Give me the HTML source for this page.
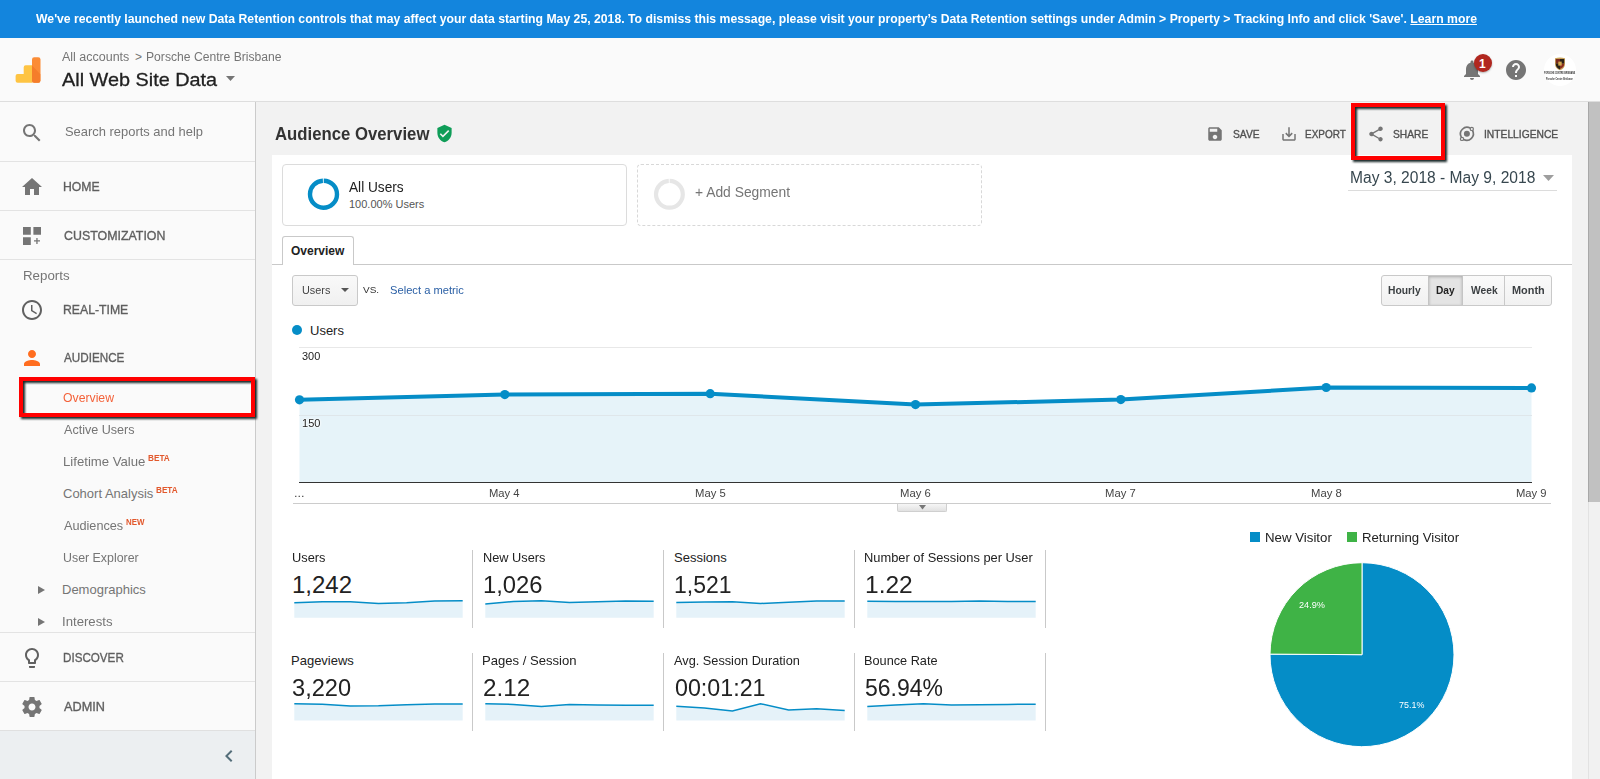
<!DOCTYPE html>
<html lang="en">
<head>
<meta charset="utf-8">
<title>Analytics - Audience Overview</title>
<style>
*{box-sizing:border-box;margin:0;padding:0}
html,body{width:1600px;height:779px;overflow:hidden;background:#f2f2f2;font-family:"Liberation Sans",Arial,sans-serif;color:#222}
.t{position:absolute;white-space:nowrap;transform-origin:0 0}
.a{position:absolute}
svg{position:absolute;overflow:visible}
#banner{position:absolute;left:0;top:0;width:1600px;height:38px;background:#1385dd}
#header{position:absolute;left:0;top:38px;width:1600px;height:64px;background:#fafafa;border-bottom:1px solid #dedede}
#sidebar{position:absolute;left:0;top:102px;width:256px;height:677px;background:#fafafa;border-right:1px solid #cbcbcb}
.sep{position:absolute;left:0;width:255px;height:1px;background:#e3e3e3}
#panel{position:absolute;left:272px;top:155px;width:1300px;height:624px;background:#fff}
.redbox{position:absolute;border:4px solid #ff0000;filter:drop-shadow(2px 2px 1.3px rgba(12,28,28,.95))}
.vsep{position:absolute;width:1px;height:78px;background:#c9c9c9}
</style>
</head>
<body>
<div id="banner"></div>
<div class="t" style="left:36px;top:11px;font-size:13px;line-height:15px;font-weight:bold;transform:scaleX(0.9409);color:#fff;">We've recently launched new Data Retention controls that may affect your data starting May 25, 2018. To dismiss this message, please visit your property’s Data Retention settings under Admin &gt; Property &gt; Tracking Info and click 'Save'. <u>Learn more</u></div>
<div id="header"></div>
<svg style="left:14px;top:56px" width="28" height="28" viewBox="0 0 28 28">
<defs><clipPath id="gab"><rect x="18" y="1.2" width="8.5" height="25.6" rx="2.2"/></clipPath></defs>
<path d="M3.6 17.9h6.1v-6.6a2 2 0 0 1 2-2h6.8v17.5H3.6a2 2 0 0 1 -2-2v-4.9a2 2 0 0 1 2-2z" fill="#fec443"/>
<g clip-path="url(#gab)"><rect x="18" y="1" width="9" height="26" fill="#fb8c36"/><path d="M18 9.6L26.6 18.4V27H18z" fill="#f57d2a"/></g>
</svg>
<div class="t" style="left:62px;top:50px;font-size:12px;line-height:14px;transform:scaleX(1.0407);color:#757575;">All accounts</div>
<div class="t" style="left:135px;top:50px;font-size:12px;line-height:14px;color:#757575;">&gt;</div>
<div class="t" style="left:146px;top:50px;font-size:12px;line-height:14px;transform:scaleX(1.0113);color:#757575;">Porsche Centre Brisbane</div>
<div class="t" style="left:62px;top:69px;font-size:19px;line-height:21px;transform:scaleX(1.0441);color:#212121;-webkit-text-stroke:0.3px;">All Web Site Data</div>
<svg style="left:226px;top:76px" width="9" height="5" viewBox="0 0 9 5"><path d="M0 0h9L4.5 5z" fill="#757575"/></svg>
<svg style="left:1459.8px;top:58px" width="24" height="24" viewBox="0 0 24 24"><path fill="#757575" d="M12 22c1.1 0 2-.9 2-2h-4c0 1.1.89 2 2 2zm6-6v-5c0-3.07-1.64-5.64-4.5-6.32V4c0-.83-.67-1.5-1.5-1.5s-1.5.67-1.5 1.5v.68C7.63 5.36 6 7.92 6 11v5l-2 2v1h16v-1l-2-2z"/></svg>
<div class="a" style="left:1474px;top:54px;width:18px;height:18px;border-radius:9px;background:#b1271f;box-shadow:0 1px 2px rgba(0,0,0,.3)"></div>
<div class="t" style="left:1479px;top:57px;font-size:12px;line-height:14px;font-weight:bold;color:#fff;">1</div>
<svg style="left:1504px;top:58px" width="24" height="24" viewBox="0 0 24 24"><path fill="#757575" d="M12 2C6.48 2 2 6.48 2 12s4.48 10 10 10 10-4.48 10-10S17.52 2 12 2zm1 17h-2v-2h2v2zm2.07-7.75l-.9.92C13.45 12.9 13 13.5 13 15h-2v-.5c0-1.1.45-2.1 1.17-2.83l1.24-1.26c.37-.36.59-.86.59-1.41 0-1.1-.9-2-2-2s-2 .9-2 2H8c0-2.21 1.79-4 4-4s4 1.79 4 4c0 .88-.36 1.68-.93 2.25z"/></svg>
<div class="a" style="left:1544px;top:54px;width:32px;height:32px;border-radius:16px;background:#fff"></div>
<svg style="left:1554px;top:57px" width="12" height="14" viewBox="0 0 12 14"><path d="M1 1.2Q6 0 11 1.2V7Q11 11.5 6 13.2Q1 11.5 1 7z" fill="#c9a35a"/><path d="M1.8 2h4.2v4.6H1.8z" fill="#7b2a1e"/><path d="M6 6.6h4.2V7q0 3.4-4.2 5z" fill="#8b2d1f"/><path d="M6 2h4.2v4.6H6zM1.8 6.6H6v5.9Q1.8 10.6 1.8 7z" fill="#2b2118"/><rect x="4.3" y="4.6" width="3.4" height="4" fill="#d4aa4e"/></svg>
<div class="t" style="left:1544px;top:72px;font-size:2.7px;line-height:3px;font-weight:bold;transform:scaleX(0.7830);color:#333;">PORSCHE CENTRE BRISBANE</div>
<div class="t" style="left:1546px;top:77px;font-size:3px;line-height:4px;font-weight:bold;transform:scaleX(0.7469);color:#333;">Porsche Centre Brisbane</div>
<div id="sidebar"></div>
<div class="sep" style="top:161px"></div>
<div class="sep" style="top:210px"></div>
<div class="sep" style="top:259px"></div>
<div class="sep" style="top:632px"></div>
<div class="sep" style="top:681px"></div>
<div class="a" style="left:0;top:730px;width:255px;height:49px;background:#eceff1;border-top:1px solid #e0e0e0"></div>
<svg style="left:20px;top:121px" width="24" height="24" viewBox="0 0 24 24"><path fill="#757575" d="M15.5 14h-.79l-.28-.27C15.41 12.59 16 11.11 16 9.5 16 5.91 13.09 3 9.5 3S3 5.91 3 9.5 5.91 16 9.5 16c1.61 0 3.09-.59 4.23-1.57l.27.28v.79l5 4.99L20.49 19l-4.99-5zm-6 0C7.01 14 5 11.99 5 9.5S7.01 5 9.5 5 14 7.01 14 9.5 11.99 14 9.5 14z"/></svg>
<div class="t" style="left:65px;top:124px;font-size:13px;line-height:15px;transform:scaleX(0.9942);color:#757575;">Search reports and help</div>
<svg style="left:20px;top:175px" width="24" height="24" viewBox="0 0 24 24"><path fill="#757575" d="M10 20v-6h4v6h5v-8h3L12 3 2 12h3v8z"/></svg>
<div class="t" style="left:63px;top:179px;font-size:13px;line-height:15px;-webkit-text-stroke:0.35px;transform:scaleX(0.9403);color:#5f5f5f;">HOME</div>
<svg style="left:20px;top:224px" width="24" height="24" viewBox="0 0 24 24"><path fill="#757575" d="M3 3h7.8v7.8H3zM13.4 3h7.6v7.8h-7.6zM3 13.3h7.8V21H3zM17.6 14h-1.3v2.3H14v1.3h2.3V20h1.3v-2.4H20v-1.3h-2.4z"/></svg>
<div class="t" style="left:64px;top:228px;font-size:13px;line-height:15px;-webkit-text-stroke:0.35px;transform:scaleX(0.9534);color:#5f5f5f;">CUSTOMIZATION</div>
<div class="t" style="left:23px;top:268px;font-size:13px;line-height:15px;transform:scaleX(1.0226);color:#757575;">Reports</div>
<svg style="left:20px;top:298px" width="24" height="24" viewBox="0 0 24 24"><path fill="#616161" d="M11.99 2C6.47 2 2 6.48 2 12s4.47 10 9.99 10C17.52 22 22 17.52 22 12S17.52 2 11.99 2zM12 20c-4.42 0-8-3.58-8-8s3.58-8 8-8 8 3.58 8 8-3.58 8-8 8zm.5-13H11v6l5.25 3.15.75-1.23-4.5-2.67z"/></svg>
<div class="t" style="left:63px;top:302px;font-size:13px;line-height:15px;-webkit-text-stroke:0.35px;transform:scaleX(0.9415);color:#5f5f5f;">REAL-TIME</div>
<svg style="left:20px;top:346px" width="24" height="24" viewBox="0 0 24 24"><path fill="#ff6d1f" d="M12 12c2.21 0 4-1.79 4-4s-1.79-4-4-4-4 1.79-4 4 1.79 4 4 4zm0 2c-2.67 0-8 1.34-8 4v2h16v-2c0-2.66-5.33-4-8-4z"/></svg>
<div class="t" style="left:64px;top:350px;font-size:13px;line-height:15px;-webkit-text-stroke:0.35px;transform:scaleX(0.8986);color:#5f5f5f;">AUDIENCE</div>
<div class="t" style="left:63px;top:390px;font-size:13px;line-height:15px;transform:scaleX(0.9413);color:#f4623a;">Overview</div>
<div class="t" style="left:64px;top:422px;font-size:13px;line-height:15px;transform:scaleX(0.9673);color:#757575;">Active Users</div>
<div class="t" style="left:63px;top:454px;font-size:13px;line-height:15px;transform:scaleX(1.0126);color:#757575;">Lifetime Value</div>
<div class="t" style="left:148px;top:453px;font-size:9px;line-height:10px;font-weight:bold;transform:scaleX(0.9119);color:#e2582c;">BETA</div>
<div class="t" style="left:63px;top:486px;font-size:13px;line-height:15px;color:#757575;">Cohort Analysis</div>
<div class="t" style="left:156px;top:485px;font-size:9px;line-height:10px;font-weight:bold;transform:scaleX(0.9083);color:#e2582c;">BETA</div>
<div class="t" style="left:64px;top:518px;font-size:13px;line-height:15px;transform:scaleX(0.9752);color:#757575;">Audiences</div>
<div class="t" style="left:126px;top:517px;font-size:9px;line-height:10px;font-weight:bold;transform:scaleX(0.8785);color:#e2582c;">NEW</div>
<div class="t" style="left:63px;top:550px;font-size:13px;line-height:15px;transform:scaleX(0.9532);color:#757575;">User Explorer</div>
<svg style="left:38px;top:586px" width="7" height="8" viewBox="0 0 7 8"><path d="M0 0L7 4L0 8z" fill="#757575"/></svg>
<div class="t" style="left:62px;top:582px;font-size:13px;line-height:15px;color:#757575;">Demographics</div>
<svg style="left:38px;top:618px" width="7" height="8" viewBox="0 0 7 8"><path d="M0 0L7 4L0 8z" fill="#757575"/></svg>
<div class="t" style="left:62px;top:614px;font-size:13px;line-height:15px;transform:scaleX(1.0134);color:#757575;">Interests</div>
<svg style="left:20px;top:646px" width="24" height="24" viewBox="0 0 24 24"><path fill="#616161" d="M9 21c0 .55.45 1 1 1h4c.55 0 1-.45 1-1v-1H9v1zm3-19C8.14 2 5 5.14 5 9c0 2.38 1.19 4.47 3 5.74V17c0 .55.45 1 1 1h6c.55 0 1-.45 1-1v-2.26c1.81-1.27 3-3.36 3-5.74 0-3.86-3.14-7-7-7zm2.85 11.1l-.85.6V16h-4v-2.3l-.85-.6C7.8 12.16 7 10.63 7 9c0-2.76 2.24-5 5-5s5 2.24 5 5c0 1.63-.8 3.16-2.15 4.1z"/></svg>
<div class="t" style="left:63px;top:650px;font-size:13px;line-height:15px;-webkit-text-stroke:0.35px;transform:scaleX(0.8953);color:#5f5f5f;">DISCOVER</div>
<svg style="left:20px;top:695px" width="24" height="24" viewBox="0 0 24 24"><path fill="#757575" d="M19.43 12.98c.04-.32.07-.64.07-.98s-.03-.66-.07-.98l2.11-1.65c.19-.15.24-.42.12-.64l-2-3.46c-.12-.22-.39-.3-.61-.22l-2.49 1c-.52-.4-1.08-.73-1.69-.98l-.38-2.65C14.46 2.18 14.25 2 14 2h-4c-.25 0-.46.18-.49.42l-.38 2.65c-.61.25-1.17.59-1.69.98l-2.49-1c-.23-.09-.49 0-.61.22l-2 3.46c-.13.22-.07.49.12.64l2.11 1.65c-.04.32-.07.65-.07.98s.03.66.07.98l-2.11 1.65c-.19.15-.24.42-.12.64l2 3.46c.12.22.39.3.61.22l2.49-1c.52.4 1.08.73 1.69.98l.38 2.65c.03.24.24.42.49.42h4c.25 0 .46-.18.49-.42l.38-2.65c.61-.25 1.17-.59 1.69-.98l2.49 1c.23.09.49 0 .61-.22l2-3.46c.12-.22.07-.49-.12-.64l-2.11-1.65zM12 15.5c-1.93 0-3.5-1.57-3.5-3.5s1.57-3.5 3.5-3.5 3.5 1.57 3.5 3.5-1.57 3.5-3.5 3.5z"/></svg>
<div class="t" style="left:64px;top:699px;font-size:13px;line-height:15px;-webkit-text-stroke:0.35px;transform:scaleX(0.9770);color:#5f5f5f;">ADMIN</div>
<svg style="left:217px;top:744px" width="24" height="24" viewBox="0 0 24 24"><path fill="#546e7a" d="M15.41 7.41L14 6l-6 6 6 6 1.41-1.41L10.83 12z"/></svg>
<div class="redbox" style="left:19px;top:377px;width:236px;height:40px"></div>
<div id="panel"></div>
<div class="t" style="left:275px;top:124px;font-size:18px;line-height:20px;font-weight:bold;transform:scaleX(0.9297);color:#333;">Audience Overview</div>
<svg style="left:434.6px;top:124.2px" width="19" height="19" viewBox="0 0 24 24"><path fill="#0f9d58" d="M12 1L3 5v6c0 5.55 3.84 10.74 9 12 5.16-1.26 9-6.45 9-12V5l-9-4zm-2 16l-4-4 1.41-1.41L10 14.17l6.59-6.59L18 9l-8 8z"/></svg>
<svg style="left:1205.7px;top:125px" width="18" height="18" viewBox="0 0 24 24"><path fill="#757575" d="M17 3H5c-1.11 0-2 .9-2 2v14c0 1.1.89 2 2 2h14c1.1 0 2-.9 2-2V7l-4-4zm-5 16c-1.66 0-3-1.34-3-3s1.34-3 3-3 3 1.34 3 3-1.34 3-3 3zm3-10H5V5h10v4z"/></svg>
<div class="t" style="left:1233px;top:128px;font-size:11px;line-height:12px;-webkit-text-stroke:0.35px;transform:scaleX(0.9334);color:#505050;">SAVE</div>
<svg style="left:1279.9px;top:125px" width="18" height="18" viewBox="0 0 24 24"><path fill="#757575" d="M19 12v7H5v-7H3v7c0 1.1.9 2 2 2h14c1.1 0 2-.9 2-2v-7h-2zm-6 .67l2.59-2.58L17 11.5l-5 5-5-5 1.41-1.41L11 12.67V3h2z"/></svg>
<div class="t" style="left:1305px;top:128px;font-size:11px;line-height:12px;-webkit-text-stroke:0.35px;transform:scaleX(0.9060);color:#505050;">EXPORT</div>
<svg style="left:1366.6px;top:125px" width="18" height="18" viewBox="0 0 24 24"><path fill="#757575" d="M18 16.08c-.76 0-1.44.3-1.96.77L8.91 12.7c.05-.23.09-.46.09-.7s-.04-.47-.09-.7l7.05-4.11c.54.5 1.25.81 2.04.81 1.66 0 3-1.34 3-3s-1.34-3-3-3-3 1.34-3 3c0 .24.04.47.09.7L8.04 9.81C7.5 9.31 6.79 9 6 9c-1.66 0-3 1.34-3 3s1.34 3 3 3c.79 0 1.5-.31 2.04-.81l7.12 4.16c-.05.21-.08.43-.08.65 0 1.61 1.31 2.92 2.92 2.92 1.61 0 2.92-1.31 2.92-2.92s-1.31-2.92-2.92-2.92z"/></svg>
<div class="t" style="left:1393px;top:128px;font-size:11px;line-height:12px;-webkit-text-stroke:0.35px;transform:scaleX(0.9302);color:#505050;">SHARE</div>
<svg style="left:1458px;top:125px" width="18" height="18" viewBox="0 0 18 18" fill="none" stroke="#757575" stroke-width="1.7"><circle cx="8.9" cy="8.8" r="3" fill="#757575" stroke="none"/><path d="M3.3 12.1A6.6 6.6 0 0 1 12.2 3.1"/><path d="M14.5 5.5A6.6 6.6 0 0 1 5.6 14.5"/><circle cx="13.8" cy="3.9" r="1.6" stroke-width="1.2"/><circle cx="4" cy="13.9" r="1.6" stroke-width="1.2"/></svg>
<div class="t" style="left:1484px;top:128px;font-size:11px;line-height:12px;-webkit-text-stroke:0.35px;transform:scaleX(0.9340);color:#505050;">INTELLIGENCE</div>
<div class="redbox" style="left:1351px;top:103px;width:94px;height:57px"></div>
<div class="t" style="left:1350px;top:169px;font-size:16px;line-height:17px;transform:scaleX(0.9738);color:#37474f;">May 3, 2018 - May 9, 2018</div>
<svg style="left:1543px;top:175px" width="11" height="6" viewBox="0 0 11 6"><path d="M0 0h11L5.5 6z" fill="#9e9e9e"/></svg>
<div class="a" style="left:1348px;top:190px;width:209px;height:1px;background:#dcdcdc"></div>
<div class="a" style="left:282px;top:164px;width:345px;height:62px;border:1px solid #dcdcdc;border-radius:4px;background:#fff"></div>
<svg style="left:307px;top:178px" width="33" height="33" viewBox="0 0 33 33"><circle cx="16.5" cy="16.2" r="13.5" fill="none" stroke="#058dc7" stroke-width="4.4" stroke-dasharray="83.4 1.4" transform="rotate(-89 16.5 16.2)"/></svg>
<div class="t" style="left:349px;top:179px;font-size:14px;line-height:16px;transform:scaleX(0.9765);color:#222;">All Users</div>
<div class="t" style="left:349px;top:198px;font-size:11px;line-height:12px;color:#555;">100.00% Users</div>
<div class="a" style="left:637px;top:164px;width:345px;height:62px;border:1px dashed #d8d8d8;border-radius:4px;background:#fff"></div>
<svg style="left:653px;top:178px" width="33" height="33" viewBox="0 0 33 33"><circle cx="16.4" cy="16.3" r="13.4" fill="none" stroke="#e6e6e6" stroke-width="4.2" stroke-dasharray="82.8 1.4" transform="rotate(-89 16.4 16.3)"/></svg>
<div class="t" style="left:695px;top:183px;font-size:15px;line-height:17px;transform:scaleX(0.9233);color:#757575;">+ Add Segment</div>
<div class="a" style="left:272px;top:264px;width:1300px;height:1px;background:#c9c9c9"></div>
<div class="a" style="left:282px;top:236px;width:72px;height:29px;border:1px solid #c9c9c9;border-bottom:none;border-radius:3px 3px 0 0;background:#fff"></div>
<div class="t" style="left:291px;top:244px;font-size:12px;line-height:14px;font-weight:bold;color:#222;">Overview</div>
<div class="a" style="left:292px;top:275px;width:66px;height:31px;border:1px solid #c9c9c9;border-radius:3px;background:linear-gradient(#f9f9f9,#f0f0f0)"></div>
<div class="t" style="left:302px;top:284px;font-size:11px;line-height:12px;transform:scaleX(0.9878);color:#444;">Users</div>
<svg style="left:341px;top:288px" width="8" height="4" viewBox="0 0 8 4"><path d="M0 0h8L4 4z" fill="#555"/></svg>
<div class="t" style="left:363px;top:284px;font-size:9.5px;line-height:11px;transform:scaleX(1.0482);color:#333;">VS.</div>
<div class="t" style="left:390px;top:284px;font-size:11px;line-height:12px;transform:scaleX(1.0156);color:#2a5fa5;">Select a metric</div>
<div class="a" style="left:1381px;top:275px;width:171px;height:31px;border:1px solid #c9c9c9;border-radius:3px;background:linear-gradient(#fafafa,#f1f1f1)"></div>
<div class="a" style="left:1428px;top:276px;width:35px;height:29px;background:#e4e4e4;box-shadow:inset 0 1px 3px rgba(0,0,0,.25);border-left:1px solid #c4c4c4;border-right:1px solid #c4c4c4"></div>
<div class="a" style="left:1504px;top:276px;width:1px;height:29px;background:#c9c9c9"></div>
<div class="t" style="left:1388px;top:284px;font-size:11px;line-height:12px;font-weight:bold;transform:scaleX(0.9366);color:#3c4043;">Hourly</div>
<div class="t" style="left:1436px;top:284px;font-size:11px;line-height:12px;font-weight:bold;transform:scaleX(0.9231);color:#222;">Day</div>
<div class="t" style="left:1471px;top:284px;font-size:11px;line-height:12px;font-weight:bold;transform:scaleX(0.9318);color:#3c4043;">Week</div>
<div class="t" style="left:1512px;top:284px;font-size:11px;line-height:12px;font-weight:bold;transform:scaleX(0.9911);color:#3c4043;">Month</div>
<svg style="left:292px;top:325px" width="10" height="10"><circle cx="5" cy="5" r="5" fill="#058dc7"/></svg>
<div class="t" style="left:310px;top:323px;font-size:13px;line-height:15px;color:#222;">Users</div>
<svg style="left:0;top:0" width="1600" height="779" viewBox="0 0 1600 779">
<rect x="299" y="347" width="1233" height="1" fill="#e8e8e8"/>
<polygon points="299.5,482 299.5,399.8 504.8,394.6 710.2,393.7 915.5,404.6 1120.8,399.6 1326.2,387.5 1531.5,387.9 1531.5,482" fill="#e6f3f9"/>
<rect x="299" y="415" width="1233" height="1" fill="#dfe6ea"/>
<rect x="299" y="482" width="1233" height="1" fill="#333"/>
<polyline points="299.5,399.8 504.8,394.6 710.2,393.7 915.5,404.6 1120.8,399.6 1326.2,387.5 1531.5,387.9" fill="none" stroke="#058dc7" stroke-width="4" stroke-linejoin="round"/>
<circle cx="299.5" cy="399.8" r="4.6" fill="#058dc7"/>
<circle cx="504.8" cy="394.6" r="4.6" fill="#058dc7"/>
<circle cx="710.2" cy="393.7" r="4.6" fill="#058dc7"/>
<circle cx="915.5" cy="404.6" r="4.6" fill="#058dc7"/>
<circle cx="1120.8" cy="399.6" r="4.6" fill="#058dc7"/>
<circle cx="1326.2" cy="387.5" r="4.6" fill="#058dc7"/>
<circle cx="1531.5" cy="387.9" r="4.6" fill="#058dc7"/>
</svg>
<div class="t" style="left:302px;top:351px;font-size:10px;line-height:11px;transform:scaleX(1.0943);color:#222;">300</div>
<div class="t" style="left:302px;top:418px;font-size:10px;line-height:11px;transform:scaleX(1.1017);color:#222;text-shadow:0 0 2px #fff,0 0 2px #fff,0 0 2px #fff;">150</div>
<div class="t" style="left:294px;top:487px;font-size:11px;line-height:12px;transform:scaleX(1.1515);color:#444;">...</div>
<div class="t" style="left:489px;top:487px;font-size:11px;line-height:12px;transform:scaleX(1.0196);color:#444;">May 4</div>
<div class="t" style="left:695px;top:487px;font-size:11px;line-height:12px;transform:scaleX(1.0255);color:#444;">May 5</div>
<div class="t" style="left:900px;top:487px;font-size:11px;line-height:12px;transform:scaleX(1.0261);color:#444;">May 6</div>
<div class="t" style="left:1105px;top:487px;font-size:11px;line-height:12px;transform:scaleX(1.0244);color:#444;">May 7</div>
<div class="t" style="left:1311px;top:487px;font-size:11px;line-height:12px;transform:scaleX(1.0262);color:#444;">May 8</div>
<div class="t" style="left:1516px;top:487px;font-size:11px;line-height:12px;transform:scaleX(1.0218);color:#444;">May 9</div>
<div class="a" style="left:293px;top:503px;width:1258px;height:1px;background:#ccc"></div>
<div class="a" style="left:897px;top:504px;width:50px;height:8px;background:linear-gradient(#f6f6f6,#e1e1e1);border:1px solid #cfcfcf;border-top:none;border-radius:0 0 2px 2px"></div>
<svg style="left:919px;top:505px" width="7" height="5" viewBox="0 0 7 5"><path d="M0 0h7L3.5 4.6z" fill="#777"/></svg>
<div class="t" style="left:292px;top:550px;font-size:13px;line-height:15px;transform:scaleX(0.9840);color:#222;">Users</div>
<div class="t" style="left:292px;top:571px;font-size:24px;line-height:27px;color:#222;">1,242</div>
<div class="vsep" style="left:472px;top:550px"></div>
<div class="t" style="left:483px;top:550px;font-size:13px;line-height:15px;transform:scaleX(0.9817);color:#222;">New Users</div>
<div class="t" style="left:483px;top:571px;font-size:24px;line-height:27px;transform:scaleX(0.9919);color:#222;">1,026</div>
<div class="vsep" style="left:663px;top:550px"></div>
<div class="t" style="left:674px;top:550px;font-size:13px;line-height:15px;color:#222;">Sessions</div>
<div class="t" style="left:674px;top:571px;font-size:24px;line-height:27px;transform:scaleX(0.9581);color:#222;">1,521</div>
<div class="vsep" style="left:854px;top:550px"></div>
<div class="t" style="left:864px;top:550px;font-size:13px;line-height:15px;transform:scaleX(0.9896);color:#222;">Number of Sessions per User</div>
<div class="t" style="left:865px;top:571px;font-size:24px;line-height:27px;transform:scaleX(1.0212);color:#222;">1.22</div>
<div class="vsep" style="left:1045px;top:550px"></div>
<div class="t" style="left:291px;top:653px;font-size:13px;line-height:15px;color:#222;">Pageviews</div>
<div class="t" style="left:292px;top:674px;font-size:24px;line-height:27px;transform:scaleX(0.9846);color:#222;">3,220</div>
<div class="vsep" style="left:472px;top:653px"></div>
<div class="t" style="left:482px;top:653px;font-size:13px;line-height:15px;transform:scaleX(1.0066);color:#222;">Pages / Session</div>
<div class="t" style="left:483px;top:674px;font-size:24px;line-height:27px;transform:scaleX(1.0107);color:#222;">2.12</div>
<div class="vsep" style="left:663px;top:653px"></div>
<div class="t" style="left:674px;top:653px;font-size:13px;line-height:15px;transform:scaleX(0.9799);color:#222;">Avg. Session Duration</div>
<div class="t" style="left:675px;top:674px;font-size:24px;line-height:27px;transform:scaleX(0.9690);color:#222;">00:01:21</div>
<div class="vsep" style="left:854px;top:653px"></div>
<div class="t" style="left:864px;top:653px;font-size:13px;line-height:15px;transform:scaleX(0.9787);color:#222;">Bounce Rate</div>
<div class="t" style="left:865px;top:674px;font-size:24px;line-height:27px;transform:scaleX(0.9573);color:#222;">56.94%</div>
<div class="vsep" style="left:1045px;top:653px"></div>
<svg style="left:0;top:0" width="1600" height="779" viewBox="0 0 1600 779">
<polygon points="294.3,617.7 294.3,602.8 322.4,601.8 350.4,601.8 378.5,603.5 406.6,602.8 434.6,601.0 462.7,600.7 462.7,617.7" fill="#e5f2f9"/>
<polyline points="294.3,602.8 322.4,601.8 350.4,601.8 378.5,603.5 406.6,602.8 434.6,601.0 462.7,600.7" fill="none" stroke="#058dc7" stroke-width="1.5"/>
<polygon points="485.3,617.7 485.3,604.0 513.4,601.5 541.4,600.7 569.5,602.5 597.6,601.8 625.6,601.0 653.7,601.2 653.7,617.7" fill="#e5f2f9"/>
<polyline points="485.3,604.0 513.4,601.5 541.4,600.7 569.5,602.5 597.6,601.8 625.6,601.0 653.7,601.2" fill="none" stroke="#058dc7" stroke-width="1.5"/>
<polygon points="676.3,617.7 676.3,602.5 704.4,602.0 732.4,601.8 760.5,603.5 788.6,602.3 816.6,601.0 844.7,601.0 844.7,617.7" fill="#e5f2f9"/>
<polyline points="676.3,602.5 704.4,602.0 732.4,601.8 760.5,603.5 788.6,602.3 816.6,601.0 844.7,601.0" fill="none" stroke="#058dc7" stroke-width="1.5"/>
<polygon points="867.3,617.7 867.3,601.2 895.4,601.5 923.4,601.5 951.5,601.5 979.6,601.0 1007.6,601.5 1035.7,601.5 1035.7,617.7" fill="#e5f2f9"/>
<polyline points="867.3,601.2 895.4,601.5 923.4,601.5 951.5,601.5 979.6,601.0 1007.6,601.5 1035.7,601.5" fill="none" stroke="#058dc7" stroke-width="1.5"/>
<polygon points="294.3,720.4 294.3,703.7 322.4,704.2 350.4,706.0 378.5,705.7 406.6,704.7 434.6,704.0 462.7,704.0 462.7,720.4" fill="#e5f2f9"/>
<polyline points="294.3,703.7 322.4,704.2 350.4,706.0 378.5,705.7 406.6,704.7 434.6,704.0 462.7,704.0" fill="none" stroke="#058dc7" stroke-width="1.5"/>
<polygon points="485.3,720.4 485.3,703.7 513.4,704.4 541.4,706.5 569.5,704.4 597.6,705.0 625.6,705.2 653.7,705.2 653.7,720.4" fill="#e5f2f9"/>
<polyline points="485.3,703.7 513.4,704.4 541.4,706.5 569.5,704.4 597.6,705.0 625.6,705.2 653.7,705.2" fill="none" stroke="#058dc7" stroke-width="1.5"/>
<polygon points="676.3,720.4 676.3,706.2 704.4,708.0 732.4,711.1 760.5,703.7 788.6,710.1 816.6,708.8 844.7,710.4 844.7,720.4" fill="#e5f2f9"/>
<polyline points="676.3,706.2 704.4,708.0 732.4,711.1 760.5,703.7 788.6,710.1 816.6,708.8 844.7,710.4" fill="none" stroke="#058dc7" stroke-width="1.5"/>
<polygon points="867.3,720.4 867.3,706.5 895.4,705.0 923.4,703.7 951.5,705.0 979.6,704.7 1007.6,704.4 1035.7,704.2 1035.7,720.4" fill="#e5f2f9"/>
<polyline points="867.3,706.5 895.4,705.0 923.4,703.7 951.5,705.0 979.6,704.7 1007.6,704.4 1035.7,704.2" fill="none" stroke="#058dc7" stroke-width="1.5"/>
</svg>
<svg style="left:0;top:0" width="1600" height="779" viewBox="0 0 1600 779">
<path d="M1362,654.7 L1362,562.7 A92,92 0 1 1 1270.00,654.12 Z" fill="#058dc7" stroke="#fff" stroke-width="1"/>
<path d="M1362,654.7 L1270.00,654.12 A92,92 0 0 1 1362,562.7 Z" fill="#3fb346" stroke="#fff" stroke-width="1"/>
<rect x="1250" y="532" width="10" height="10" fill="#058dc7"/><rect x="1347" y="532" width="10" height="10" fill="#3fb346"/>
</svg>
<div class="t" style="left:1265px;top:530px;font-size:13px;line-height:15px;transform:scaleX(1.0207);color:#222;">New Visitor</div>
<div class="t" style="left:1362px;top:530px;font-size:13px;line-height:15px;transform:scaleX(1.0125);color:#222;">Returning Visitor</div>
<div class="t" style="left:1299px;top:600px;font-size:9px;line-height:10px;transform:scaleX(1.0153);color:#fff;">24.9%</div>
<div class="t" style="left:1399px;top:700px;font-size:9px;line-height:10px;transform:scaleX(0.9924);color:#fff;">75.1%</div>
<div class="a" style="left:1588px;top:102px;width:12px;height:677px;background:#f1f1f1;border-left:1px solid #e2e2e2"></div>
<div class="a" style="left:1588px;top:102px;width:12px;height:400px;background:#c1c1c1;border-left:1px solid #a8a8a8"></div>
</body>
</html>
